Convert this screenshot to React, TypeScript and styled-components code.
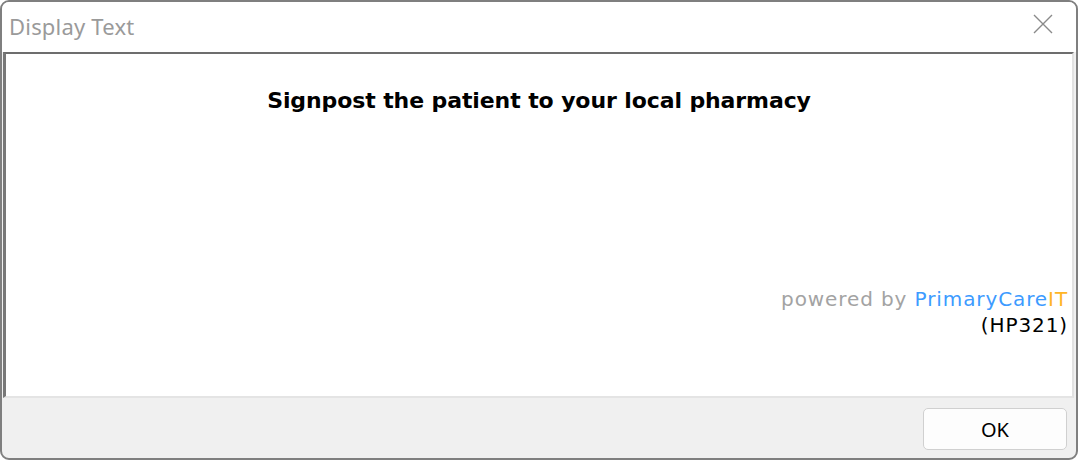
import React from 'react';
import styled, { createGlobalStyle } from 'styled-components';

const GlobalStyle = createGlobalStyle`
  html, body {
    margin: 0;
    padding: 0;
    background: #ffffff;
  }
`;

const Window = styled.div`
  box-sizing: border-box;
  width: 1078px;
  height: 460px;
  display: flex;
  flex-direction: column;
  border: 2px solid #7f7f7f;
  border-radius: 9px;
  overflow: hidden;
  background: #f0f0f0;
`;

const TitleBar = styled.div`
  height: 50px;
  flex-shrink: 0;
  display: flex;
  justify-content: space-between;
  align-items: flex-start;
  background: #ffffff;
`;

const Title = styled.div`
  padding: 11px 0 0 7px;
  font-family: "Noto Sans", "Open Sans", sans-serif;
  font-size: 22px;
  letter-spacing: 0.2px;
  line-height: 26px;
  color: #9a9a9a;
`;

const CloseButton = styled.button`
  border: none;
  background: transparent;
  padding: 12px 23px 0 0;
  margin: 0;
  cursor: pointer;
  display: flex;
`;

const Panel = styled.div`
  box-sizing: border-box;
  height: 346px;
  margin: 0 2px 0 1px;
  display: flex;
  flex-direction: column;
  background: #ffffff;
  border-top: 2px solid #6d6d6d;
  border-left: 3px solid #787878;
  border-right: 2px solid #e2e2e2;
  border-bottom: 2px solid #e4e4e4;
`;

const Message = styled.div`
  padding-top: 33px;
  text-align: center;
  font-family: "DejaVu Sans", Verdana, sans-serif;
  font-weight: bold;
  font-size: 22px;
  letter-spacing: -0.1px;
  line-height: 28px;
  color: #000000;
`;

const Credit = styled.div`
  margin-top: auto;
  padding: 0 4px 58px 0;
  text-align: right;
  font-family: "DejaVu Sans", Verdana, sans-serif;
  font-size: 20px;
  letter-spacing: 0.9px;
  line-height: 26px;
  color: #000000;
`;

const Tone = styled.span<{ $color: string }>`
  color: ${p => p.$color};
`;

const Footer = styled.div`
  flex: 1;
  display: flex;
  justify-content: flex-end;
  align-items: flex-start;
  padding: 10px 9px 0 0;
`;

const OkButton = styled.button`
  box-sizing: border-box;
  width: 144px;
  height: 42px;
  border: 1px solid #d0d0d0;
  border-radius: 5px;
  background: #fdfdfd;
  font-family: "Noto Sans", "Open Sans", sans-serif;
  font-size: 20px;
  color: #000000;
  cursor: pointer;
`;

const CloseIcon = () => (
  <svg width="20" height="20" viewBox="0 0 20 20">
    <path d="M1 1 L19 19 M19 1 L1 19" stroke="#8a8a8a" strokeWidth="1.4" fill="none" />
  </svg>
);

export default function App() {
  return (
    <>
      <GlobalStyle />
      <Window>
        <TitleBar>
          <Title>Display Text</Title>
          <CloseButton aria-label="Close">
            <CloseIcon />
          </CloseButton>
        </TitleBar>
        <Panel>
          <Message>Signpost the patient to your local pharmacy</Message>
          <Credit>
            <Tone $color="#a3a3a3">powered by </Tone>
            <Tone $color="#3d9bff">PrimaryCare</Tone>
            <Tone $color="#ffb526">IT</Tone>
            <br />
            (HP321)
          </Credit>
        </Panel>
        <Footer>
          <OkButton>OK</OkButton>
        </Footer>
      </Window>
    </>
  );
}
